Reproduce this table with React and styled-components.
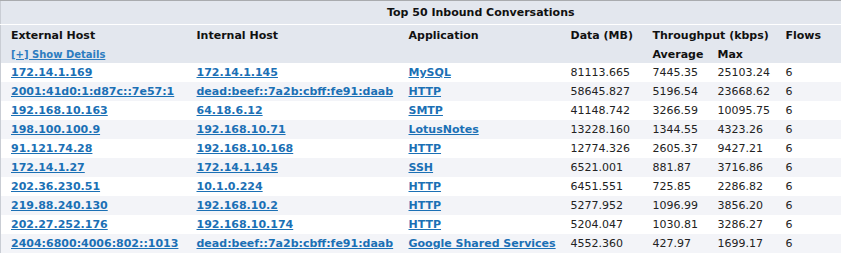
import React from "react";
import styled, { createGlobalStyle } from "styled-components";

const Global = createGlobalStyle`
  html, body { margin: 0; padding: 0; background: #fff; }
  body { font-family: "DejaVu Sans", Verdana, sans-serif; font-size: 11px; }
`;

const Table = styled.table`
  width: 841px;
  table-layout: fixed;
  border-collapse: collapse;
  border-top: 1px solid #a9abae;
  border-left: 1px solid #c9cdd4;
  font-family: "DejaVu Sans", Verdana, sans-serif;
  font-size: 11px;
`;

const TitleCell = styled.th`
  height: 23px;
  padding: 0 0 0 119px;
  background: #e3e7ee;
  border-bottom: 1px solid #ffffff;
  text-align: center;
  font-weight: bold;
  color: #111;
`;

const HeadCell = styled.th`
  height: ${(p) => p.$h || 20}px;
  padding: 0 0 0 10px;
  background: #e3e7ee;
  text-align: left;
  vertical-align: middle;
  font-weight: bold;
  color: #111;
  white-space: nowrap;
`;

const Row = styled.tr`
  background: ${(p) => (p.$alt ? "#f3f4f8" : "#ffffff")};
`;

const Cell = styled.td`
  height: 19px;
  padding: 0 0 0 10px;
  color: #222;
  white-space: nowrap;
  vertical-align: middle;
`;

const Link = styled.a`
  color: #1b70b5;
  font-weight: bold;
  text-decoration: underline;
  cursor: pointer;
`;

const SmallLink = styled.a`
  color: #2c7cc0;
  font-size: 10px;
  font-weight: bold;
  text-decoration: underline;
  cursor: pointer;
`;

const rows = [
  ["172.14.1.169", "172.14.1.145", "MySQL", "81113.665", "7445.35", "25103.24", "6"],
  ["2001:41d0:1:d87c::7e57:1", "dead:beef::7a2b:cbff:fe91:daab", "HTTP", "58645.827", "5196.54", "23668.62", "6"],
  ["192.168.10.163", "64.18.6.12", "SMTP", "41148.742", "3266.59", "10095.75", "6"],
  ["198.100.100.9", "192.168.10.71", "LotusNotes", "13228.160", "1344.55", "4323.26", "6"],
  ["91.121.74.28", "192.168.10.168", "HTTP", "12774.326", "2605.37", "9427.21", "6"],
  ["172.14.1.27", "172.14.1.145", "SSH", "6521.001", "881.87", "3716.86", "6"],
  ["202.36.230.51", "10.1.0.224", "HTTP", "6451.551", "725.85", "2286.82", "6"],
  ["219.88.240.130", "192.168.10.2", "HTTP", "5277.952", "1096.99", "3856.20", "6"],
  ["202.27.252.176", "192.168.10.174", "HTTP", "5204.047", "1030.81", "3286.27", "6"],
  ["2404:6800:4006:802::1013", "dead:beef::7a2b:cbff:fe91:daab", "Google Shared Services", "4552.360", "427.97", "1699.17", "6"],
];

const widths = [186, 212, 162, 82, 65, 68, 66];

export default function App() {
  return (
    <>
      <Global />
      <Table>
        <colgroup>
          {widths.map((w, i) => (
            <col key={i} style={{ width: w }} />
          ))}
        </colgroup>
        <thead>
          <tr>
            <TitleCell colSpan={7}>Top 50 Inbound Conversations</TitleCell>
          </tr>
          <tr>
            <HeadCell>External Host</HeadCell>
            <HeadCell>Internal Host</HeadCell>
            <HeadCell>Application</HeadCell>
            <HeadCell>Data (MB)</HeadCell>
            <HeadCell colSpan={2}>Throughput (kbps)</HeadCell>
            <HeadCell>Flows</HeadCell>
          </tr>
          <tr>
            <HeadCell $h={18}>
              <SmallLink>[+] Show Details</SmallLink>
            </HeadCell>
            <HeadCell $h={18} />
            <HeadCell $h={18} />
            <HeadCell $h={18} />
            <HeadCell $h={18}>Average</HeadCell>
            <HeadCell $h={18}>Max</HeadCell>
            <HeadCell $h={18} />
          </tr>
        </thead>
        <tbody>
          {rows.map((r, i) => (
            <Row key={i} $alt={i % 2 === 1}>
              <Cell><Link>{r[0]}</Link></Cell>
              <Cell><Link>{r[1]}</Link></Cell>
              <Cell><Link>{r[2]}</Link></Cell>
              <Cell>{r[3]}</Cell>
              <Cell>{r[4]}</Cell>
              <Cell>{r[5]}</Cell>
              <Cell>{r[6]}</Cell>
            </Row>
          ))}
        </tbody>
      </Table>
    </>
  );
}
